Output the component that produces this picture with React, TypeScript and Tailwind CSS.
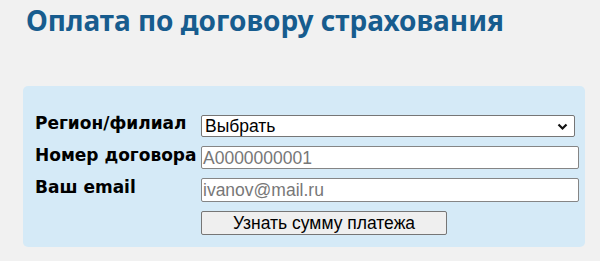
export default function App() {
  return (
    <div className="w-[600px] h-[261px] bg-[#f1f1f1] overflow-hidden relative">
      <h1 className="pl-[26px] pt-[2px] text-[28px] leading-[36px] font-bold text-[#175c8e] [font-family:'Noto_Sans',sans-serif]">
        Оплата по договору страхования
      </h1>
      <div className="ml-[23px] mt-[48px] w-[562px] h-[161px] rounded-[5px] bg-[#d5eaf7] pl-[12px] pt-[29px]">
        <div className="grid grid-cols-[166px_1fr] gap-y-[9px] items-start">
          <div className="-mt-[2px] text-[17px] leading-[20px] font-bold text-black [font-family:'DejaVu_Sans',sans-serif] whitespace-nowrap">Регион/филиал</div>
          <div className="relative w-[374px] h-[22px] bg-white border border-[#767676] rounded-[2px] flex items-center pl-[3px] text-[17.5px] leading-[20px] [font-family:'Liberation_Sans',Arial,sans-serif] text-black">
            Выбрать
            <svg className="absolute right-[6px] top-[7px]" width="11" height="8" viewBox="0 0 11 8">
              <path d="M1.5 1.5 L5.5 5.5 L9.5 1.5" stroke="#111" strokeWidth="2.2" fill="none" />
            </svg>
          </div>
          <div className="-mt-[1px] text-[17px] leading-[20px] font-bold text-black [font-family:'DejaVu_Sans',sans-serif] whitespace-nowrap">Номер договора</div>
          <div className="w-[378px] h-[23px] bg-white border border-[#858585] rounded-[2px] flex items-center pl-[1px] text-[17.5px] leading-[20px] [font-family:'Liberation_Sans',Arial,sans-serif] text-[#777]">
            A0000000001
          </div>
          <div className="-mt-[1px] text-[17px] leading-[20px] font-bold text-black [font-family:'DejaVu_Sans',sans-serif] whitespace-nowrap">Ваш email</div>
          <div className="w-[378px] h-[24px] bg-white border border-[#858585] rounded-[2px] flex items-center pl-[1px] text-[17.5px] leading-[20px] [font-family:'Liberation_Sans',Arial,sans-serif] text-[#777]">
            ivanov@mail.ru
          </div>
          <div />
          <div className="w-[246px] h-[24px] bg-[#efefef] border border-[#767676] rounded-[2px] flex items-center justify-center text-[17.5px] leading-[20px] [font-family:'Liberation_Sans',Arial,sans-serif] text-black">
            Узнать сумму платежа
          </div>
        </div>
      </div>
    </div>
  );
}
